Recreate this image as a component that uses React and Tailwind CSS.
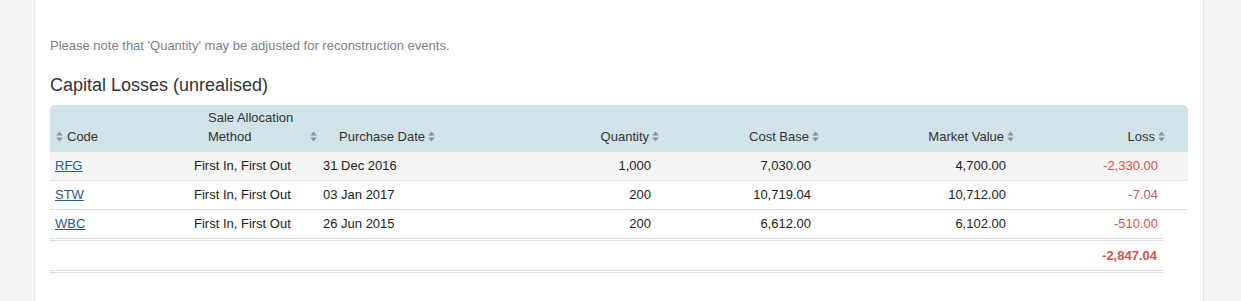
const rows = [
  { code: 'RFG', method: 'First In, First Out', date: '31 Dec 2016', qty: '1,000', cost: '7,030.00', market: '4,700.00', loss: '-2,330.00' },
  { code: 'STW', method: 'First In, First Out', date: '03 Jan 2017', qty: '200', cost: '10,719.04', market: '10,712.00', loss: '-7.04' },
  { code: 'WBC', method: 'First In, First Out', date: '26 Jun 2015', qty: '200', cost: '6,612.00', market: '6,102.00', loss: '-510.00' },
]

const cols = 'grid grid-cols-[136px_134px_150px_197px_160px_195px_166px]'

function SortIcon() {
  return (
    <svg width="7" height="11" viewBox="0 0 7 11" className="shrink-0">
      <path d="M3.5 0.5 L6.8 4.6 L0.2 4.6 Z" fill="#8b929a" />
      <path d="M3.5 10.5 L6.8 6.4 L0.2 6.4 Z" fill="#8b929a" />
    </svg>
  )
}

export default function App() {
  return (
    <div className="w-[1241px] h-[301px] bg-[#f5f5f5] overflow-hidden" style={{ fontFamily: '"Liberation Sans", Arial, sans-serif' }}>
      <div className="ml-[34px] w-[1170px] h-full bg-white border-x border-[#e3e5e9] px-[15px]">
        <p className="pt-[37px] text-[13px] leading-[18px] text-[#7b808a]">
          Please note that 'Quantity' may be adjusted for reconstruction events.
        </p>
        <h2 className="mt-[18px] text-[18px] leading-[24px] text-[#333]">Capital Losses (unrealised)</h2>

        <div className="mt-[8px] w-[1138px] text-[13px] text-[#222]">
          <div className={`${cols} h-[47px] bg-[#d1e3e9] rounded-t-[5px] text-[#333] leading-[19px] items-end pb-[6px]`}>
            <div className="flex items-center gap-[4px] pl-[6px]">
              <SortIcon />
              <span>Code</span>
            </div>
            <div className="flex items-center justify-between pl-[22px] pr-[3px]">
              <span>Sale Allocation<br />Method</span>
              <span className="self-end pb-[4px]"><SortIcon /></span>
            </div>
            <div className="flex items-center gap-[3px] pl-[19px]">
              <span>Purchase Date</span>
              <SortIcon />
            </div>
            <div className="flex items-center justify-end gap-[3px] pr-[8px]">
              <span>Quantity</span>
              <SortIcon />
            </div>
            <div className="flex items-center justify-end gap-[3px] pr-[8px]">
              <span>Cost Base</span>
              <SortIcon />
            </div>
            <div className="flex items-center justify-end gap-[3px] pr-[8px]">
              <span>Market Value</span>
              <SortIcon />
            </div>
            <div className="flex items-center justify-end gap-[3px] pr-[23px]">
              <span>Loss</span>
              <SortIcon />
            </div>
          </div>

          {rows.map((r, i) => (
            <div
              key={r.code}
              className={`${cols} items-center ${i === 0 ? 'bg-[#f5f5f5]' : 'bg-white'} ${i < rows.length - 1 ? 'h-[29px] border-b border-[#dcdfe3]' : 'h-[28px]'}`}
            >
              <div className="pl-[5px]">
                <a href="#" className="text-[#2b5a8c] underline">{r.code}</a>
              </div>
              <div className="pl-[8px]">{r.method}</div>
              <div className="pl-[3px]">{r.date}</div>
              <div className="text-right pr-[16px]">{r.qty}</div>
              <div className="text-right pr-[16px]">{r.cost}</div>
              <div className="text-right pr-[16px]">{r.market}</div>
              <div className="text-right pr-[30px] text-[#d9534f]">{r.loss}</div>
            </div>
          ))}

          <div className="w-[1113px] h-[35px] border-y-[3px] border-double border-[#dcdfe3] flex items-center justify-end pr-[6px]">
            <span className="font-bold text-[#d9534f]">-2,847.04</span>
          </div>
        </div>
      </div>
    </div>
  )
}
